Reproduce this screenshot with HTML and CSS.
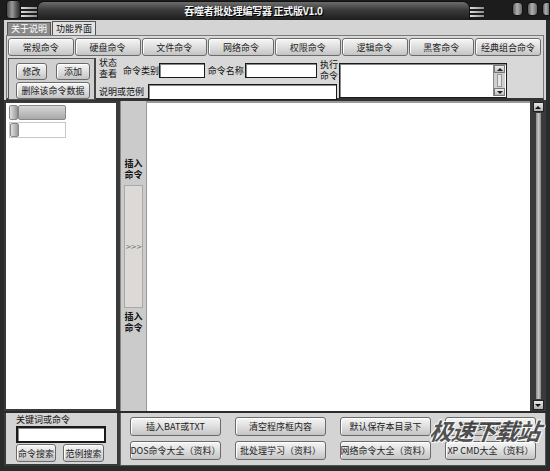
FILE: index.html
```html
<!DOCTYPE html>
<html lang="zh">
<head>
<meta charset="utf-8">
<link rel="stylesheet" href="styles.css">
</head>
<body>
<div class="win">
  <div class="titlebar">
    <div class="knob"></div>
    <div class="grip"><i></i><i></i><i></i></div>
    <div class="band"><span class="title">吞噬者批处理编写器 正式版V1.0</span></div>
    <div class="grip right"><i></i><i></i><i></i></div>
    <div class="tbtns"><b></b><b></b><b class="cut"></b></div>
  </div>
  <div class="client">
    <div class="tabs"><span class="tab off">关于说明</span><span class="tab on">功能界面</span></div>
    <div class="toppanel">
      <div class="cmdrow">
        <span class="btn">常规命令</span><span class="btn">硬盘命令</span><span class="btn">文件命令</span><span class="btn">网络命令</span>
        <span class="btn">权限命令</span><span class="btn">逻辑命令</span><span class="btn">黑客命令</span><span class="btn">经典组合命令</span>
      </div>
      <div class="editrow">
        <div class="editbox">
          <div class="pair"><span class="btn sm">修改</span><span class="btn sm">添加</span></div>
          <span class="btn wide">删除该命令数据</span>
        </div>
        <div class="fields">
          <div class="frow1">
            <span class="stack s1">状态<br>查看</span>
            <span class="lbl l1">命令类别</span><span class="inp i1"></span>
            <span class="lbl l2">命令名称</span><span class="inp i2"></span>
            <span class="stack s2">执行<br>命令</span>
          </div>
          <div class="frow2">
            <span class="lbl l3">说明或范例</span><span class="inp i3"></span>
          </div>
        </div>
        <div class="exec">
          <div class="exectext"></div>
          <div class="minisb"><span class="arr up"></span><span class="thumb"></span><span class="arr dn"></span></div>
        </div>
      </div>
    </div>
    <div class="main">
      <div class="tree">
        <div class="node n1"><span class="box"></span><span class="bar"></span></div>
        <div class="node n2"><span class="box"></span><span class="rest"></span></div>
      </div>
      <div class="strip">
        <span class="vlab">插入<br>命令</span>
        <span class="ins">&gt;&gt;&gt;</span>
        <span class="vlab">插入<br>命令</span>
      </div>
      <div class="code"></div>
      <div class="vscroll">
        <span class="sarr"><i class="tri up"></i></span>
        <span class="track"></span>
        <span class="sarr"><i class="tri dn"></i></span>
      </div>
    </div>
    <div class="bottom">
      <div class="search">
        <span class="klbl">关键词或命令</span>
        <span class="inp kinp"></span>
        <div class="sbtns"><span class="btn sb">命令搜索</span><span class="btn sb">范例搜索</span></div>
      </div>
      <div class="actions">
        <span class="btn act">插入BAT或TXT</span>
        <span class="btn act">清空程序框内容</span>
        <span class="btn act">默认保存本目录下</span>
        <span class="btn act">另存到指定位置</span>
        <span class="btn act">DOS命令大全（资料）</span>
        <span class="btn act">批处理学习（资料）</span>
        <span class="btn act">网络命令大全（资料）</span>
        <span class="btn act">XP CMD大全（资料）</span>
      </div>
    </div>
  </div>
  <div class="watermark">极速下载站</div>
</div>
</body>
</html>
```
FILE: styles.css
```css
* { box-sizing: border-box; margin: 0; padding: 0; }
html, body { width: 550px; height: 471px; overflow: hidden; }
body { font-family: "Noto Sans CJK SC", "DejaVu Sans", sans-serif; font-size: 9px; color: #111; background: #2a2a2a; }

.win { position: relative; width: 550px; height: 471px; background: #2b2b2b; display: flex; flex-direction: column; }

/* title bar */
.titlebar { height: 20px; display: flex; align-items: flex-start; background: #1c1c1c; }
.knob { width: 15px; height: 19px; margin-left: 6px; border-radius: 4px; background: linear-gradient(90deg, #4a4a4a, #9a9a9a 40%, #5a5a5a 70%, #2a2a2a); border: 1px solid #111; }
.grip { width: 16px; height: 20px; display: flex; flex-direction: column; justify-content: center; gap: 2px; padding-top: 4px; }
.grip i { display: block; height: 2px; background: linear-gradient(90deg, #e0e0e0, #8a8a8a); }
.grip.right { width: 14px; margin-right: 28px; }
.band { flex: 1; height: 19px; margin-top: 1px; border-radius: 7px 7px 0 0; background: linear-gradient(#6c6c6c, #3a3a3a 45%, #1e1e1e); border: 1px solid #111; border-bottom: none; text-align: center; }
.title { color: #f4f4f4; font-weight: bold; font-size: 10px; line-height: 17px; letter-spacing: -0.3px; text-shadow: 1px 1px 0 #000; }
.tbtns { display: flex; gap: 4px; padding-top: 2px; }
.tbtns b { display: block; width: 11px; height: 14px; border-radius: 4px; background: linear-gradient(90deg, #5a5a5a, #b0b0b0 45%, #6a6a6a); border: 1px solid #111; }
.tbtns b.cut { width: 8px; border-radius: 4px 0 0 4px; }

/* client */
.client { flex: 1; margin: 0 4px 5px 4px; background: #d4d4d4; display: flex; flex-direction: column; }

.tabs { height: 15px; display: flex; align-items: flex-end; padding-left: 3px; gap: 1px; }
.tab { height: 14px; padding: 0 3px; line-height: 13px; border: 1px solid #555; border-bottom: none; font-size: 9px; }
.tab.off { background: #8a8a8a; color: #fff; height: 13px; line-height: 12px; }
.tab.on { background: #e2e2e2; color: #111; }

.toppanel { height: 65px; margin: 0 2px; border: 1px solid #7a7a7a; border-bottom: 2px solid #333; background: #d8d8d8; padding: 2px 2px 0 1px; }
.cmdrow { display: grid; grid-template-columns: repeat(8, 1fr); gap: 1px; height: 18px; }

.btn { display: flex; align-items: center; justify-content: center; white-space: nowrap; border: 1px solid #6a6a6a; border-radius: 3px; background: linear-gradient(#f6f6f6, #dcdcdc 55%, #c4c4c4); box-shadow: inset 1px 1px 0 #fff; font-size: 9px; color: #222; }

.editrow { display: flex; height: 42px; margin-top: 2px; }
.editbox { width: 88px; height: 42px; border: 1px solid #555; border-right: 2px solid #444; background: #d0d0d0; padding: 4px 4px 0 7px; display: flex; flex-direction: column; gap: 2px; }
.pair { display: flex; gap: 9px; }
.btn.sm { width: 31px; height: 17px; }
.btn.sm + .btn.sm { width: 34px; }
.btn.wide { width: 74px; height: 17px; }

.fields { width: 243px; padding-left: 3px; display: flex; flex-direction: column; }
.frow1 { height: 25px; display: flex; align-items: center; }
.frow2 { height: 17px; display: flex; align-items: center; }
.stack { line-height: 10.5px; font-size: 9px; display: block; }
.s1 { width: 24px; align-self: flex-start; padding-top: 0; }
.s2 { width: 20px; margin-left: 2px; text-align: center; }
.lbl { white-space: nowrap; font-size: 9px; }
.l1 { width: 36px; }
.l2 { width: 38px; margin-left: 3px; }
.l3 { width: 49px; }
.inp { display: block; background: #fff; border: 1px solid #1a1a1a; box-shadow: inset 1px 1px 0 #888; }
.i1 { width: 46px; height: 15px; }
.i2 { width: 72px; height: 15px; }
.i3 { width: 189px; height: 16px; }

.exec { width: 168px; height: 35px; margin-top: 5px; margin-left: 0; border: 1px solid #1a1a1a; box-shadow: inset 1px 1px 0 #888; background: #fff; display: flex; justify-content: flex-end; padding: 1px; }
.minisb { width: 12px; display: flex; flex-direction: column; background: #cfcfcf; border-left: 1px solid #888; }
.arr { display: block; height: 8px; background: linear-gradient(#eee, #bbb); border: 1px solid #777; position: relative; }
.arr::after { content: ""; position: absolute; left: 2px; top: 2px; border-left: 3px solid transparent; border-right: 3px solid transparent; }
.arr.up::after { border-bottom: 3px solid #222; }
.arr.dn::after { border-top: 3px solid #222; }
.minisb .thumb { flex: 1; margin: 1px 3px; background: #e6e6e6; border: 1px solid #999; }

/* main */
.main { height: 311px; display: grid; grid-template-columns: 116px 27px 1fr 16px; border-top: 1px solid #333; }
.tree { background: #fff; border: 2px solid #3a3a3a; border-right: 4px solid #3a3a3a; padding: 2px 0 0 3px; }
.node { display: flex; height: 16px; width: 57px; }
.n1 .box { width: 9px; height: 15px; border-radius: 2px; background: linear-gradient(90deg, #e0e0e0, #9a9a9a); border: 1px solid #888; }
.n1 .bar { flex: 1; height: 15px; border-radius: 2px; background: linear-gradient(#d8d8d8, #a8a8a8); border: 1px solid #888; }
.n2 { margin-top: 1px; border: 1px solid #c8c8c8; }
.n2 .box { width: 9px; height: 14px; border-radius: 2px; background: linear-gradient(90deg, #e0e0e0, #9a9a9a); border: 1px solid #888; }
.strip { background: #cbcbcb; border-left: 1px solid #888; border-right: 1px solid #999; display: flex; flex-direction: column; align-items: center; padding-top: 57px; }
.vlab { font-weight: bold; font-size: 9px; line-height: 11px; text-align: center; color: #111; }
.ins { width: 19px; height: 123px; margin: 5px 0 3px; background: #dcd9d6; border: 1px solid #a8a8a8; display: flex; align-items: center; justify-content: center; font-size: 7px; color: #6a6a6a; letter-spacing: -0.5px; font-family: "DejaVu Sans", sans-serif; }
.code { background: #fff; border-top: 2px solid #9a9a9a; }
.vscroll { background: #3a3a3a; display: flex; flex-direction: column; align-items: center; padding: 1px 0; }
.sarr { width: 11px; height: 10px; background: linear-gradient(#e8e8e8, #b0b0b0); border: 1px solid #222; display: flex; align-items: center; justify-content: center; }
.tri { display: block; width: 0; height: 0; border-left: 3px solid transparent; border-right: 3px solid transparent; }
.tri.up { border-bottom: 3px solid #111; }
.tri.dn { border-top: 3px solid #111; }
.track { flex: 1; width: 5px; margin: 1px 0; background: linear-gradient(90deg, #8a8a8a, #c4c4c4, #8a8a8a); }

/* bottom */
.bottom { flex: 1; display: grid; grid-template-columns: 116px 1fr; border-top: 2px solid #2a2a2a; }
.search { border: 2px solid #3a3a3a; border-top: none; border-right: 3px solid #3a3a3a; padding: 2px 0 0 10px; display: flex; flex-direction: column; background: #d4d4d4; }
.klbl { font-size: 9px; line-height: 10px; height: 11px; }
.kinp { width: 90px; height: 17px; border-width: 2px; }
.sbtns { display: flex; gap: 7px; margin-top: 1px; }
.btn.sb { width: 40px; height: 18px; }
.btn.sb + .btn.sb { width: 41px; }
.actions { border: 1px solid #555; border-top: none; border-left: 1px solid #666; padding: 4px 0 0 9px; display: grid; grid-template-columns: repeat(4, 91px); grid-template-rows: 19px 19px; column-gap: 14px; row-gap: 5px; align-content: start; }
.btn.act { height: 19px; }

.watermark { position: absolute; left: 430px; top: 413px; font-size: 23px; font-weight: bold; font-style: italic; color: #3c3c3c; letter-spacing: -1px; transform: skewX(-8deg); text-shadow: 1px 0 0 #fff, -1px 0 0 #fff, 0 1px 0 #fff, 0 -1px 0 #fff, 1px 1px 0 #fff, -1px -1px 0 #fff; opacity: 0.85; white-space: nowrap; }
```
